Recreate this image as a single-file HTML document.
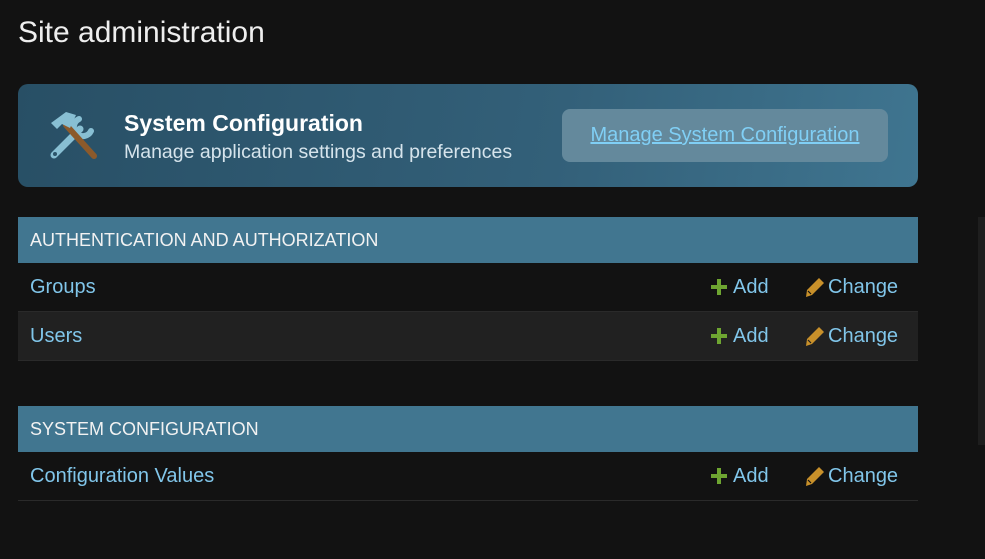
<!DOCTYPE html>
<html><head><meta charset="utf-8"><style>
body{margin:0;width:985px;height:559px;background:#121212;font-family:"Liberation Sans",sans-serif;position:relative;overflow:hidden}
h1{position:absolute;left:18px;top:16px;margin:0;font-weight:normal;font-size:30px;color:#eeeeee}
.card{position:absolute;left:18px;top:84px;width:900px;height:103px;border-radius:10px;background:linear-gradient(100deg,#284f65 0%,#336079 60%,#3f7590 100%)}
.t1{position:absolute;left:106px;top:26px;color:#fff;font-weight:bold;font-size:23px}
.t2{position:absolute;left:106px;top:57px;color:#d6e4ec;font-size:19.5px}
.btn{position:absolute;left:544px;top:25px;width:326px;height:53px;border-radius:8px;background:#64899c;text-align:center;line-height:52px;color:#80cff5;text-decoration:underline;font-size:20px}
.mod{position:absolute;left:18px;width:900px}
.cap{height:46px;background:#417690;color:#f2f2f2;font-size:18px;line-height:46px;padding-left:12px}
.row{height:48px;border-bottom:1px solid #2a2a2a;position:relative;color:#81c6ea;font-size:20px;line-height:48px}
.row .n{position:absolute;left:12px}
.add{position:absolute;left:692px}
.add svg{position:absolute;left:0;top:15px}
.add span{position:absolute;left:23px}
.chg{position:absolute;left:786px}
.chg svg{position:absolute;left:0;top:13px}
.chg span{position:absolute;left:24px}
.sb{position:absolute;left:978px;top:217px;width:7px;height:228px;background:#1e1e1e}
</style></head><body>
<h1>Site administration</h1>
<div class="card">
<svg style="position:absolute;left:30px;top:24px" width="54" height="54" viewBox="0 0 54 54">
<g stroke="#88bfd3" stroke-linecap="round" fill="none"><path d="M6 47 L32 21" stroke-width="7"/><path d="M31 11 a9 9 0 1 0 12 12" stroke-width="6"/></g>
<circle cx="7" cy="46" r="2" fill="#2c546a"/>
<path d="M18 17 L46 48" stroke="#8c5a2b" stroke-width="6" stroke-linecap="round"/>
<path d="M3 15 L18 4 L28 7 L22 20 L14 16 L9 21 Z" fill="#88bfd3"/>
</svg>
<div class="t1">System Configuration</div>
<div class="t2">Manage application settings and preferences</div>
<div class="btn">Manage System Configuration</div>
</div>
<div class="mod" style="top:217px">
<div class="cap">AUTHENTICATION AND AUTHORIZATION</div>
<div class="row"><span class="n">Groups</span><span class="add"><svg width="18" height="18"><path d="M9 1v16M1 9h16" stroke="#6ea531" stroke-width="4"/></svg><span>Add</span></span><span class="chg"><svg width="22" height="22" viewBox="0 0 22 22"><path d="M15 2 L20 7 L8 19 L2 21 L3 14 Z" fill="#c8902a"/><path d="M4 15 L7 18" stroke="#121212" stroke-width="1.2"/></svg><span>Change</span></span></div>
<div class="row" style="background:#212121"><span class="n">Users</span><span class="add"><svg width="18" height="18"><path d="M9 1v16M1 9h16" stroke="#6ea531" stroke-width="4"/></svg><span>Add</span></span><span class="chg"><svg width="22" height="22" viewBox="0 0 22 22"><path d="M15 2 L20 7 L8 19 L2 21 L3 14 Z" fill="#c8902a"/><path d="M4 15 L7 18" stroke="#212121" stroke-width="1.2"/></svg><span>Change</span></span></div>
</div>
<div class="mod" style="top:406px">
<div class="cap">SYSTEM CONFIGURATION</div>
<div class="row"><span class="n">Configuration Values</span><span class="add"><svg width="18" height="18"><path d="M9 1v16M1 9h16" stroke="#6ea531" stroke-width="4"/></svg><span>Add</span></span><span class="chg"><svg width="22" height="22" viewBox="0 0 22 22"><path d="M15 2 L20 7 L8 19 L2 21 L3 14 Z" fill="#c8902a"/><path d="M4 15 L7 18" stroke="#121212" stroke-width="1.2"/></svg><span>Change</span></span></div>
</div>
<div class="sb"></div>
</body></html>
